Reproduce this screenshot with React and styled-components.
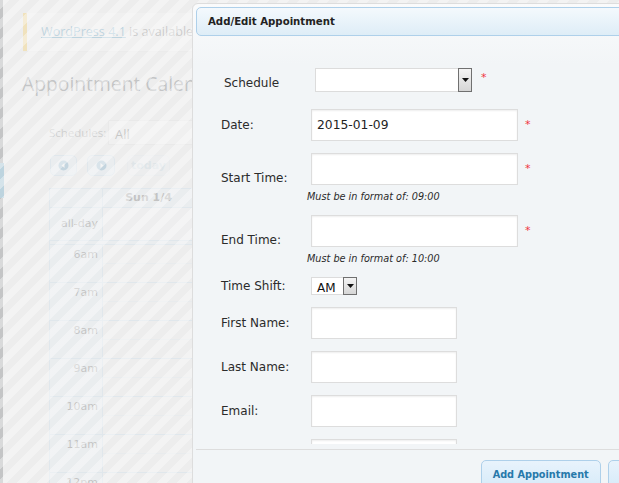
import React from 'react';
import styled, { createGlobalStyle } from 'styled-components';

const GlobalStyle = createGlobalStyle`
  html, body { margin: 0; padding: 0; }
  body {
    width: 619px; height: 483px; overflow: hidden;
    background: #f1f1f1;
    font-family: "Open Sans", "Noto Sans", sans-serif;
  }
`;

const Page = styled.div`
  position: relative;
  width: 619px;
  height: 483px;
  overflow: hidden;
  display: flex;
  background: #f1f1f1;
`;

const MenuEdge = styled.div`
  width: 3px;
  flex: none;
  background: #23282d;
  display: flex;
  flex-direction: column;
`;

const MenuCurrent = styled.div`
  margin-top: 163px;
  width: 4px;
  height: 35px;
  background: #0073aa;
`;

const Main = styled.div`
  flex: 1;
  padding-left: 19px;
  display: flex;
  flex-direction: column;
  color: #444;
`;

const Notice = styled.div`
  margin: 13px 0 0 1px;
  width: 560px;
  box-sizing: border-box;
  border-left: 4px solid #ffba00;
  background: #fff;
  box-shadow: 0 1px 1px rgba(0, 0, 0, 0.04);
  padding: 11px 14px;
  font-size: 12.6px;
  line-height: 16px;
  white-space: nowrap;
`;

const NoticeLink = styled.a`
  color: #0073aa;
  text-decoration: underline;
`;

const Heading = styled.h2`
  margin: 18px 0 0 0;
  font-size: 19.3px;
  font-weight: 400;
  line-height: 29px;
  color: #23282d;
  white-space: nowrap;
`;

const FilterRow = styled.div`
  margin: 22px 0 0 27px;
  display: flex;
  align-items: center;
  height: 25px;
`;

const FilterLabel = styled.span`
  width: 59px;
  font-size: 11.5px;
  color: #555;
`;

const FilterSelect = styled.div`
  width: 160px;
  height: 25px;
  box-sizing: border-box;
  border: 1px solid #ddd;
  background: #fff;
  padding: 0 6px;
  font-size: 13px;
  line-height: 26px;
  color: #333;
`;

const NavRow = styled.div`
  margin: 10px 0 0 28px;
  display: flex;
  align-items: center;
  gap: 10px;
`;

const NavButton = styled.div`
  width: ${(p) => p.$w}px;
  height: 21px;
  box-sizing: border-box;
  border: 1px solid #aed0ea;
  border-radius: 5px;
  background: linear-gradient(#e4f1fb, #d7ebf9);
  display: flex;
  align-items: center;
  justify-content: center;
  margin-left: ${(p) => p.$ml || 0}px;
  opacity: ${(p) => (p.$disabled ? 0.35 : 1)};
  font-family: "DejaVu Sans", sans-serif;
  font-size: 11px;
  font-weight: bold;
  color: #2779aa;
`;

const Cal = styled.div`
  margin: 12px 0 0 27px;
  display: grid;
  grid-template-columns: 53px repeat(7, 92px);
  border-top: 1px solid #aed0ea;
  border-left: 1px solid #aed0ea;
  font-family: "DejaVu Sans", sans-serif;
  font-size: 11px;
  color: #222;
  width: max-content;
`;

const HeadCell = styled.div`
  height: 19px;
  box-sizing: border-box;
  background: #deedf7;
  border-right: 1px solid #aed0ea;
  border-bottom: 1px solid #aed0ea;
  font-weight: bold;
  text-align: center;
  line-height: 18px;
`;

const AxisCell = styled.div`
  height: ${(p) => p.$h}px;
  box-sizing: border-box;
  background: #deedf7;
  border-right: 1px solid #aed0ea;
  border-bottom: 1px solid #aed0ea;
  text-align: right;
  padding-right: 4px;
  line-height: ${(p) => p.$lh}px;
`;

const DayCell = styled.div`
  grid-column: span 7;
  height: ${(p) => p.$h}px;
  box-sizing: border-box;
  background: ${(p) =>
    p.$half
      ? 'linear-gradient(to bottom, transparent 18px, #d5e5f1 18px, #d5e5f1 19px, transparent 19px)'
      : '#f2f5f7'};
  border-right: 1px solid #aed0ea;
  border-bottom: 1px solid #aed0ea;
`;

const Divider = styled.div`
  grid-column: 1 / -1;
  height: 4px;
  box-sizing: border-box;
  background: #deedf7;
  border-bottom: 1px solid #aed0ea;
`;

const Overlay = styled.div`
  position: absolute;
  inset: 0;
  background:
    repeating-linear-gradient(
      135deg,
      rgba(255, 255, 255, 0.36) 0 7px,
      rgba(255, 255, 255, 0) 7px 14.14px
    ),
    rgba(236, 236, 236, 0.8);
`;

const Dialog = styled.div`
  position: absolute;
  left: 192px;
  top: 3px;
  width: 496px;
  height: 500px;
  box-sizing: border-box;
  padding: 3px;
  border: 1px solid #dddddd;
  border-radius: 6px;
  background: linear-gradient(#fafbfc 0, #f2f5f7 60px);
  display: flex;
  flex-direction: column;
  font-family: "DejaVu Sans", sans-serif;
  color: #333;
`;

const TitleBar = styled.div`
  height: 29px;
  flex: none;
  box-sizing: border-box;
  border: 1px solid #aed0ea;
  border-radius: 5px;
  background: linear-gradient(#f4f9fd, #deedf7);
  display: flex;
  align-items: center;
  padding: 0 11px;
  font-family: "DejaVu Sans Condensed", "DejaVu Sans", sans-serif;
  font-stretch: condensed;
  font-weight: bold;
  font-size: 11.3px;
  color: #222;
`;

const Body = styled.div`
  height: 408px;
  flex: none;
  overflow: hidden;
  padding-top: 32px;
  box-sizing: border-box;
`;

const ScheduleRow = styled.div`
  display: flex;
  align-items: flex-start;
  padding-left: 28px;
`;

const Label = styled.span`
  font-size: 12px;
  line-height: 15px;
  color: #2b2b2b;
  white-space: nowrap;
`;

const ScheduleLabel = styled(Label)`
  width: 91px;
  padding-top: 8px;
`;

const Select = styled.div`
  width: ${(p) => p.$w}px;
  height: ${(p) => p.$h}px;
  box-sizing: border-box;
  border: 1px solid #dcdcdc;
  background: #fff;
  display: flex;
  align-items: stretch;
`;

const SelectValue = styled.span`
  flex: 1;
  padding-left: 5px;
  font-size: 12px;
  line-height: ${(p) => p.$lh}px;
  color: #111;
`;

const ArrowBtn = styled.span`
  width: 14px;
  flex: none;
  box-sizing: border-box;
  border: 1px solid #707070;
  background: linear-gradient(#f4f4f4, #d6d6d6);
  display: flex;
  align-items: center;
  justify-content: center;
  margin: -1px -1px -1px 0;
`;

const Star = styled.span`
  color: #f0343f;
  font-size: 11px;
  line-height: 10px;
  margin-left: ${(p) => p.$ml}px;
  margin-top: ${(p) => p.$mt || 0}px;
`;

const FormGrid = styled.div`
  margin-top: 17px;
  padding-left: 25px;
  display: grid;
  grid-template-columns: 90px auto;
  row-gap: 12px;
  align-items: center;
`;

const FieldStack = styled.div`
  display: flex;
  flex-direction: column;
  align-items: flex-start;
`;

const FieldRow = styled.div`
  display: flex;
  align-items: center;
`;

const TextInput = styled.input`
  width: ${(p) => p.$w}px;
  height: 32px;
  box-sizing: border-box;
  margin: 0;
  border: 1px solid #dddddd;
  box-shadow: inset 0 1px 2px rgba(0, 0, 0, 0.07);
  background: #fff;
  padding: 0 5px;
  font-family: "DejaVu Sans", sans-serif;
  font-size: 12.3px;
  color: #222;
  outline: none;
`;

const Hint = styled.div`
  margin: 6px 0 0 -4px;
  font-size: 9.7px;
  line-height: 12px;
  font-style: italic;
  color: #2b2b2b;
  white-space: nowrap;
`;

const ButtonPane = styled.div`
  margin-top: 5px;
  border-top: 1px solid #dddddd;
  padding: 10px 16px 0 0;
  display: flex;
  justify-content: flex-end;
  gap: 7px;
`;

const Button = styled.div`
  height: 28px;
  box-sizing: border-box;
  padding: 0 ${(p) => p.$px}px;
  border: 1px solid #aed0ea;
  border-radius: 5px;
  background: linear-gradient(#e8f3fc, #d7ebf9);
  display: flex;
  align-items: center;
  font-family: "DejaVu Sans Condensed", "DejaVu Sans", sans-serif;
  font-stretch: condensed;
  font-weight: bold;
  font-size: 10.8px;
  color: #2779aa;
  white-space: nowrap;
`;

const CircleArrow = ({ dir }) => (
  <svg width="11" height="11" viewBox="0 0 11 11">
    <circle cx="5.5" cy="5.5" r="5" fill="#2779aa" />
    {dir === 'left' ? (
      <path d="M3.5 5.5 L6.5 3 L6.5 8 Z" fill="#fff" />
    ) : (
      <path d="M7.5 5.5 L4.5 3 L4.5 8 Z" fill="#fff" />
    )}
  </svg>
);

const Caret = () => (
  <svg width="7" height="4" viewBox="0 0 7 4">
    <path d="M0 0 L7 0 L3.5 4 Z" fill="#111" />
  </svg>
);

const days = ['Sun 1/4', 'Mon 1/5', 'Tue 1/6', 'Wed 1/7', 'Thu 1/8', 'Fri 1/9', 'Sat 1/10'];
const hours = ['6am', '7am', '8am', '9am', '10am', '11am', '12pm', '1pm'];

function TextField({ label, width, value, hint, required }) {
  return (
    <>
      <Label>{label}</Label>
      <FieldStack>
        <FieldRow>
          <TextInput $w={width} defaultValue={value || ''} readOnly />
          {required && <Star $ml={7}>*</Star>}
        </FieldRow>
        {hint && <Hint>{hint}</Hint>}
      </FieldStack>
    </>
  );
}

export default function App() {
  return (
    <>
      <GlobalStyle />
      <Page>
        <MenuEdge>
          <MenuCurrent />
        </MenuEdge>
        <Main>
          <Notice>
            <NoticeLink href="#">WordPress 4.1</NoticeLink> is available! Please notify the site administrator.
          </Notice>
          <Heading>Appointment Calendar</Heading>
          <FilterRow>
            <FilterLabel>Schedules:</FilterLabel>
            <FilterSelect>All</FilterSelect>
          </FilterRow>
          <NavRow>
            <NavButton $w={27}>
              <CircleArrow dir="left" />
            </NavButton>
            <NavButton $w={28}>
              <CircleArrow dir="right" />
            </NavButton>
            <NavButton $w={43} $ml={2} $disabled>
              today
            </NavButton>
          </NavRow>
          <Cal>
            <HeadCell />
            {days.map((d) => (
              <HeadCell key={d}>{d}</HeadCell>
            ))}
            <AxisCell $h={33} $lh={32}>
              all-day
            </AxisCell>
            <DayCell $h={33} />
            <Divider />
            {hours.map((h) => (
              <React.Fragment key={h}>
                <AxisCell $h={38} $lh={19}>
                  {h}
                </AxisCell>
                <DayCell $h={38} $half />
              </React.Fragment>
            ))}
          </Cal>
        </Main>
        <Overlay />
        <Dialog>
          <TitleBar>Add/Edit Appointment</TitleBar>
          <Body>
            <ScheduleRow>
              <ScheduleLabel>Schedule</ScheduleLabel>
              <Select $w={157} $h={24}>
                <SelectValue $lh={22} />
                <ArrowBtn>
                  <Caret />
                </ArrowBtn>
              </Select>
              <Star $ml={9} $mt={5}>*</Star>
            </ScheduleRow>
            <FormGrid>
              <TextField label="Date:" width={207} value="2015-01-09" required />
              <TextField label="Start Time:" width={207} hint="Must be in format of: 09:00" required />
              <TextField label="End Time:" width={207} hint="Must be in format of: 10:00" required />
              <Label>Time Shift:</Label>
              <FieldRow>
                <Select $w={46} $h={18}>
                  <SelectValue $lh={20}>AM</SelectValue>
                  <ArrowBtn>
                    <Caret />
                  </ArrowBtn>
                </Select>
              </FieldRow>
              <TextField label="First Name:" width={146} />
              <TextField label="Last Name:" width={146} />
              <TextField label="Email:" width={146} />
              <TextField label="Phone:" width={146} />
            </FormGrid>
          </Body>
          <ButtonPane>
            <Button $px={11}>Add Appointment</Button>
            <Button $px={11}>Cancel</Button>
          </ButtonPane>
        </Dialog>
      </Page>
    </>
  );
}
